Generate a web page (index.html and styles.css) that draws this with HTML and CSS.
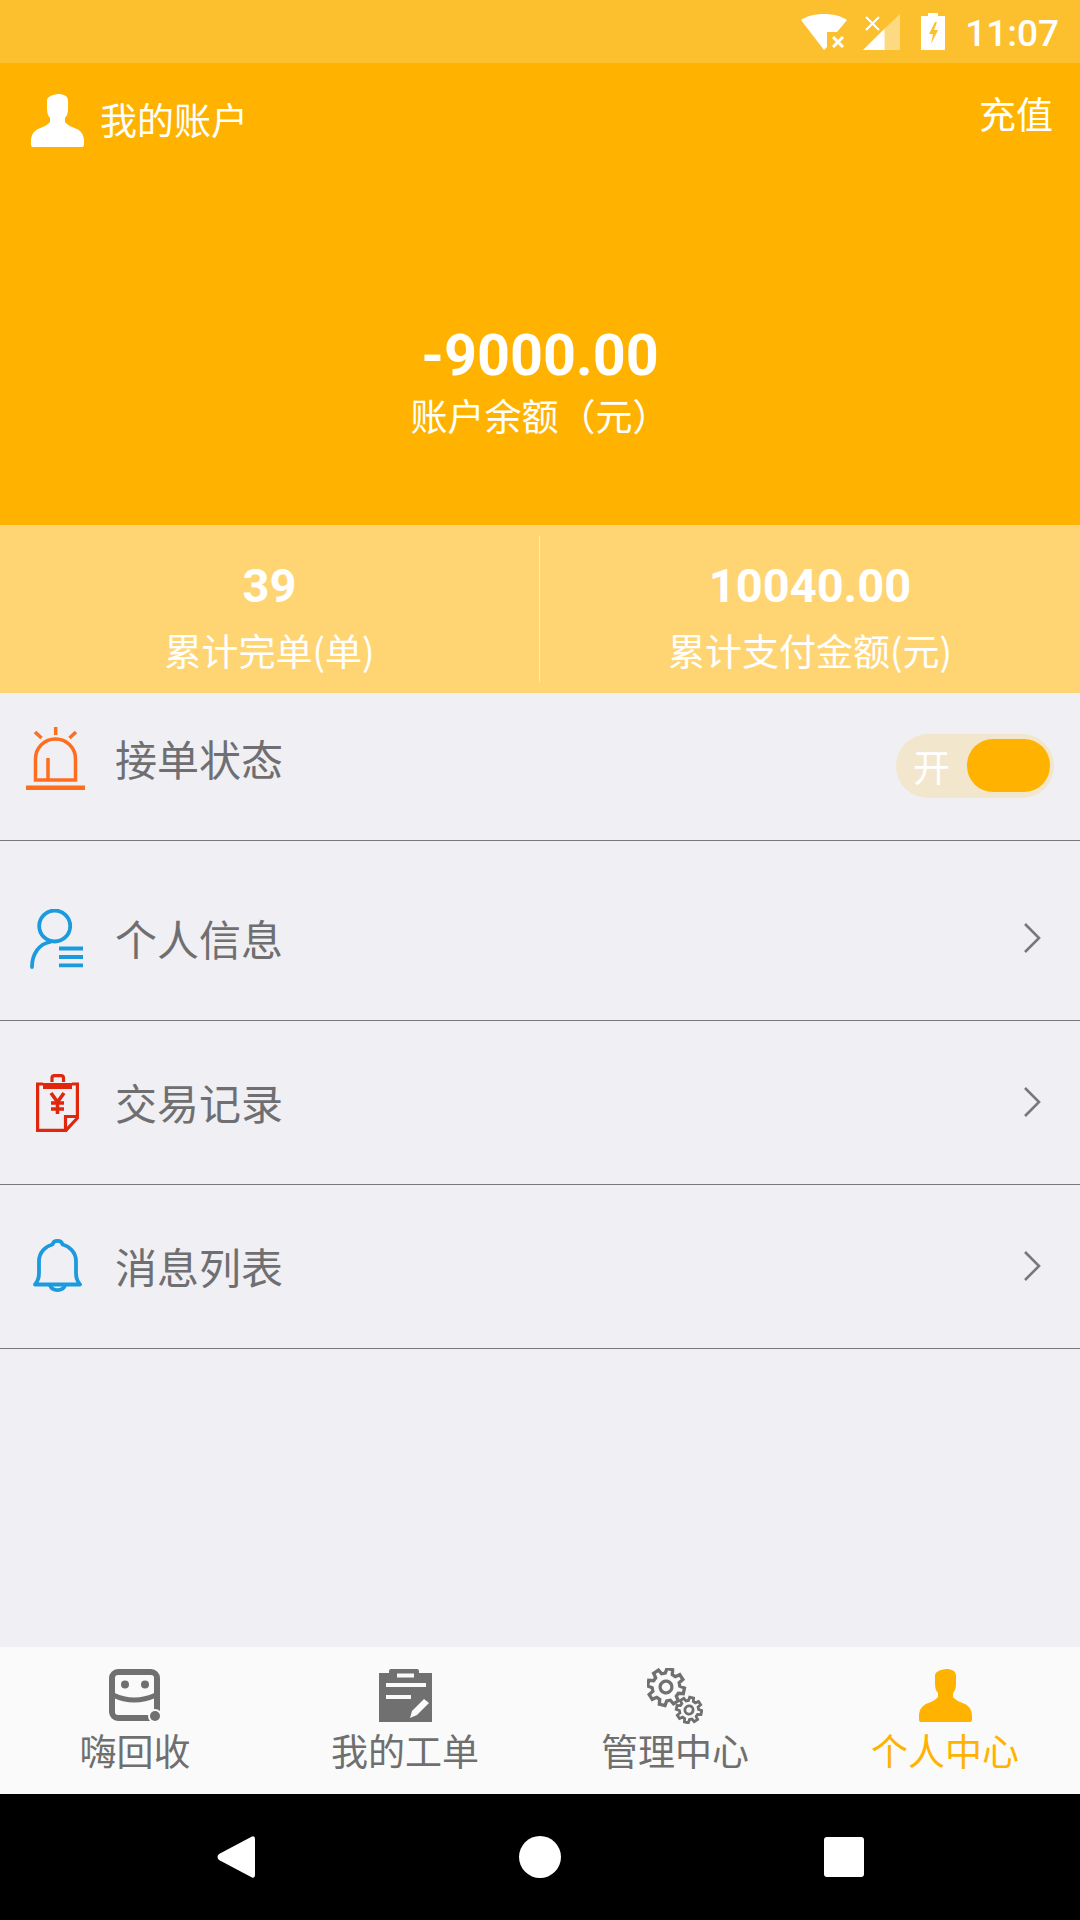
FILE: index.html
```html
<!DOCTYPE html>
<html>

<head>
  <meta name="viewport" content="width=device-width,initial-scale=1.0">
  <title>我的账户</title>
  <link rel="stylesheet" href="styles.css">
</head>

<body>
  <svg class="defs" width="0" height="0">
    <defs>
      <path id="person" d="M16 7C16 3 20 1 27 0C33 0 37 2 37 7V15C37 19 36 22 34 24V28C36 31 41 33 46 35C50 37 53 41 53 47V51Q53 53 51 53H2Q0 53 0 51V47C0 41 3 37 7 35C12 33 17 31 19 28V24C17 22 16 19 16 15Z" />
      <path id="gear" d="M7.24 -1.94L9.88 -1.56V1.56L7.24 1.94L6.49 3.75L8.09 5.88L5.88 8.09L3.75 6.49L1.94 7.24L1.56 9.88H-1.56L-1.94 7.24L-3.75 6.49L-5.88 8.09L-8.09 5.88L-6.49 3.75L-7.24 1.94L-9.88 1.56V-1.56L-7.24 -1.94L-6.49 -3.75L-8.09 -5.88L-5.88 -8.09L-3.75 -6.49L-1.94 -7.24L-1.56 -9.88H1.56L1.94 -7.24L3.75 -6.49L5.88 -8.09L8.09 -5.88L6.49 -3.75Z" />
    </defs>
  </svg>

  <div class="statusbar">
    <svg class="st-wifi" width="46" height="36" viewBox="0 0 46 36">
      <path fill="#fff" d="M0 6C6 2 14 0 23 0S40 2 46 6L36 18H26V33L23 36Z" />
      <path stroke="#fff" stroke-width="3" d="M32 23L42 33M42 23L32 33" />
    </svg>
    <svg class="st-signal" width="37" height="36" viewBox="0 0 37 36">
      <path fill="#fff" fill-opacity="0.4" d="M21.700 14.500L37 0V36H21.700Z" />
      <path fill="#fff" d="M0 36L21.700 14.500V36Z" />
      <path stroke="#fff" stroke-width="2" d="M3 3L16 16M16 3L3 16" />
    </svg>
    <svg class="st-battery" width="24" height="37" viewBox="0 0 24 37">
      <path fill="#fff" fill-rule="evenodd" d="M7 0H17V3H24V37H0V3H7ZM14 9L8 21H12L10 31L17 17H13L16 9Z" />
    </svg>
    <span class="time">11:07</span>
  </div>

  <header class="account">
    <div class="account-top">
      <div class="account-title">
        <svg width="53" height="53" viewBox="0 0 53 53"><use href="#person" fill="#fff" /></svg>
        <span class="account-name">我的账户</span>
      </div>
      <span class="recharge">充值</span>
    </div>
    <div class="balance">-9000.00</div>
    <div class="balance-label">账户余额（元）</div>
  </header>

  <section class="stats">
    <div class="stat">
      <div class="stat-num">39</div>
      <div class="stat-label">累计完单(单)</div>
    </div>
    <div class="stat-line"></div>
    <div class="stat">
      <div class="stat-num">10040.00</div>
      <div class="stat-label">累计支付金额(元)</div>
    </div>
  </section>

  <main class="list">
    <div class="row row-status">
      <div class="row-icon">
        <svg class="icon-alarm" width="59" height="63" viewBox="0 0 59 63" fill="none" stroke="#ff6d1f" stroke-width="3.500">
          <path d="M9.500 53V32a20 20 0 0 1 40 0V53Z" />
          <path d="M22 31V53M29.700 0V8M9 5L15.500 11M50 5L43.500 11" />
          <rect x="0" y="58.500" width="59" height="4.500" fill="#ff6d1f" stroke="none" />
        </svg>
      </div>
      <span class="row-text">接单状态</span>
      <div class="toggle">
        <span class="toggle-text">开</span>
        <span class="toggle-knob"></span>
      </div>
    </div>

    <div class="row row-info">
      <div class="row-icon">
        <svg width="54" height="60" viewBox="0 0 54 60" fill="none" stroke="#1b9ade" stroke-width="3.800" stroke-linecap="round">
          <circle cx="24.700" cy="17" r="15.500" />
          <path d="M2 58C2 45 9 35 20 33" />
          <path stroke-linecap="butt" d="M29 39.500H53M29 48H53M29 56.300H53" />
        </svg>
      </div>
      <span class="row-text">个人信息</span>
      <svg class="chevron" width="18" height="30" viewBox="0 0 18 30" fill="none" stroke="#77777c" stroke-width="2.600"><path d="M2 1L16 15L2 29" /></svg>
    </div>

    <div class="row">
      <div class="row-icon">
        <svg width="43" height="58" viewBox="0 0 43 58" fill="none" stroke="#e0260c" stroke-width="3.200">
          <path d="M7 10H1.600V56.400H30L41.400 44V10H36" />
          <path d="M41 42.500H29.500V56" />
          <rect x="7" y="9" width="29" height="6" fill="#e0260c" stroke="none" />
          <path d="M16 8V4Q16 1.600 18.500 1.600H25Q27.500 1.600 27.500 4V8" />
          <path stroke-width="3.600" d="M15 19L21.500 28L28 19M21.500 28V40M15 29H28M15 35H28" />
        </svg>
      </div>
      <span class="row-text">交易记录</span>
      <svg class="chevron" width="18" height="30" viewBox="0 0 18 30" fill="none" stroke="#77777c" stroke-width="2.600"><path d="M2 1L16 15L2 29" /></svg>
    </div>

    <div class="row">
      <div class="row-icon">
        <svg width="49" height="55" viewBox="0 0 49 55" fill="none" stroke="#1b9ade" stroke-width="3.800" stroke-linejoin="round">
          <path d="M2 45.500C5 42 6 38 6 34V22C6 13 13 7 19.500 5.500C20 3 22 1.900 24.500 1.900S29 3 29.500 5.500C36 7 43 13 43 22V34C43 38 44 42 47 45.500Z" />
          <path d="M17 46.500a8 7 0 0 0 15 0" />
        </svg>
      </div>
      <span class="row-text">消息列表</span>
      <svg class="chevron" width="18" height="30" viewBox="0 0 18 30" fill="none" stroke="#77777c" stroke-width="2.600"><path d="M2 1L16 15L2 29" /></svg>
    </div>
  </main>

  <nav class="tabs">
    <div class="tab">
      <svg width="53" height="53" viewBox="0 0 53 53">
        <rect x="3" y="3" width="45" height="46" rx="6" fill="none" stroke="#707070" stroke-width="6" />
        <circle cx="16" cy="15.500" r="4" fill="#707070" />
        <circle cx="36" cy="15.500" r="4" fill="#707070" />
        <path d="M4 26Q25 36 47 26" fill="none" stroke="#707070" stroke-width="5" />
        <circle cx="46" cy="47" r="7" fill="#fafafa" />
        <circle cx="46" cy="47" r="5" fill="#707070" />
      </svg>
      <span>嗨回收</span>
    </div>
    <div class="tab">
      <svg width="53" height="53" viewBox="0 0 53 53">
        <path fill="#707070" d="M0 4H10V2Q10 0 12 0H38Q40 0 40 2V4H53V53H0Z" />
        <path fill="#fafafa" d="M18 4.500H35V8.500H18ZM7 14H47V18H7ZM7 26H32V30H7Z" />
        <path fill="#fafafa" d="M45 30L50 34L38 46L31 49L33 42Z" />
      </svg>
      <span>我的工单</span>
    </div>
    <div class="tab">
      <svg class="tab-gears" width="56" height="56" viewBox="0 0 56 56" fill="none" stroke="#707070">
        <g transform="translate(19 19) scale(1.850) rotate(12)" stroke-width="1.800">
          <use href="#gear" />
          <circle r="3.200" />
        </g>
        <g transform="translate(42 42) scale(1.280) rotate(12)" stroke-width="2.200">
          <use href="#gear" />
          <circle r="3.200" />
        </g>
      </svg>
      <span>管理中心</span>
    </div>
    <div class="tab tab-active">
      <svg width="53" height="53" viewBox="0 0 53 53"><use href="#person" fill="#ffb300" /></svg>
      <span>个人中心</span>
    </div>
  </nav>

  <div class="navbar">
    <div class="nav-cell">
      <svg width="38" height="42" viewBox="0 0 38 42"><path fill="#fff" d="M35 .500Q38 -.500 38 3V39Q38 42.500 35 41.500L2 24Q-1 21 2 18Z" /></svg>
    </div>
    <div class="nav-cell"><span class="nav-home"></span></div>
    <div class="nav-cell"><span class="nav-recent"></span></div>
  </div>
</body>

</html>
```

FILE: styles.css
```css
body {
  margin: 0;
  width: 1080px;
  height: 1920px;
  display: flex;
  flex-direction: column;
  overflow: hidden;
  background: #efeff4;
  font-family: "Noto Sans CJK SC", "Noto Sans", sans-serif;
}

.defs {
  position: absolute;
}

.statusbar {
  height: 63px;
  flex: none;
  display: flex;
  align-items: center;
  justify-content: flex-end;
  padding-right: 21px;
  background: #fcc02f;
  color: #fff;
}

.st-signal {
  margin-left: 16px;
}

.st-battery {
  margin-left: 21px;
}

.time {
  margin-left: 20px;
  padding-top: 3px;
  font-family: Roboto, sans-serif;
  font-weight: 500;
  font-size: 37px;
}

.account {
  height: 462px;
  flex: none;
  box-sizing: border-box;
  padding: 31px 27px 0 31px;
  background: #ffb300;
  color: #fff;
  text-align: center;
}

.account-top {
  display: flex;
  justify-content: space-between;
  align-items: flex-start;
  font-size: 37px;
  line-height: 53px;
}

.account-title {
  display: flex;
  align-items: center;
  gap: 16px;
}

.account-name {
  margin-top: -2px;
}

.recharge {
  margin-top: -7px;
}

.balance {
  margin-top: 174px;
  font-family: Roboto, sans-serif;
  font-weight: 700;
  font-size: 57.500px;
  line-height: 70px;
  padding-right: 4px;
}

.balance-label {
  margin-top: -3px;
  font-size: 37px;
  line-height: 54px;
  padding-right: 4px;
}

.stats {
  height: 168px;
  flex: none;
  display: grid;
  grid-template-columns: 539px 1px 1fr;
  background: #ffd574;
  color: #fff;
  text-align: center;
}

.stat {
  padding-top: 33px;
}

.stat-num {
  font-family: Roboto, sans-serif;
  font-weight: 700;
  font-size: 47px;
  line-height: 56px;
}

.stat-line {
  margin: 11px 0;
  background: #ffe9b8;
}

.stat-label {
  margin-top: 9px;
  font-size: 37px;
  line-height: 54px;
}

.list {
  flex: 1;
}

.row {
  height: 163px;
  display: flex;
  align-items: center;
  padding-right: 39px;
  border-bottom: 1px solid #77777c;
}

.row-status {
  height: 147px;
  padding-right: 26px;
}

.row-status .row-icon {
  margin-bottom: 16px;
}

.row-status .row-text {
  margin-bottom: 18px;
}

.row-info {
  height: 179px;
}

.row-info > * {
  margin-top: 16px;
}

.row-icon {
  width: 114px;
  flex: none;
  display: flex;
  justify-content: center;
  padding-right: 1px;
}

.icon-alarm {
  margin-right: 3px;
}

.row-text {
  flex: 1;
  margin-bottom: 2px;
  font-size: 42px;
  line-height: 60px;
  color: #6f6f72;
}

.chevron {
  flex: none;
  margin-bottom: 2px;
}

.toggle {
  width: 158px;
  height: 64px;
  box-sizing: border-box;
  margin-bottom: 2px;
  padding: 0 4px 0 17px;
  display: flex;
  align-items: center;
  justify-content: space-between;
  border-radius: 32px;
  background: #f2e6cc;
}

.toggle-text {
  font-size: 37px;
  color: #fff;
}

.toggle-knob {
  width: 83px;
  height: 53px;
  border-radius: 26px;
  background: #ffb300;
}

.tabs {
  height: 147px;
  flex: none;
  display: flex;
  background: #fafafa;
}

.tab {
  flex: 1;
  height: 147px;
  display: flex;
  flex-direction: column;
  align-items: center;
  padding-top: 22px;
  box-sizing: border-box;
  font-size: 37px;
  line-height: 50px;
  color: #6f6f6f;
}

.tab svg {
  flex: none;
}

.tab span {
  margin-top: 3px;
}

.tab .tab-gears {
  margin: -1px 0 -2px;
}

.tab-active {
  color: #ffb300;
}

.navbar {
  height: 126px;
  flex: none;
  display: flex;
  justify-content: center;
  background: #000;
}

.nav-cell {
  width: 304px;
  display: flex;
  align-items: center;
  justify-content: center;
}

.nav-home {
  width: 42px;
  height: 42px;
  border-radius: 50%;
  background: #fff;
}

.nav-recent {
  width: 40px;
  height: 40px;
  border-radius: 3px;
  background: #fff;
}
```
